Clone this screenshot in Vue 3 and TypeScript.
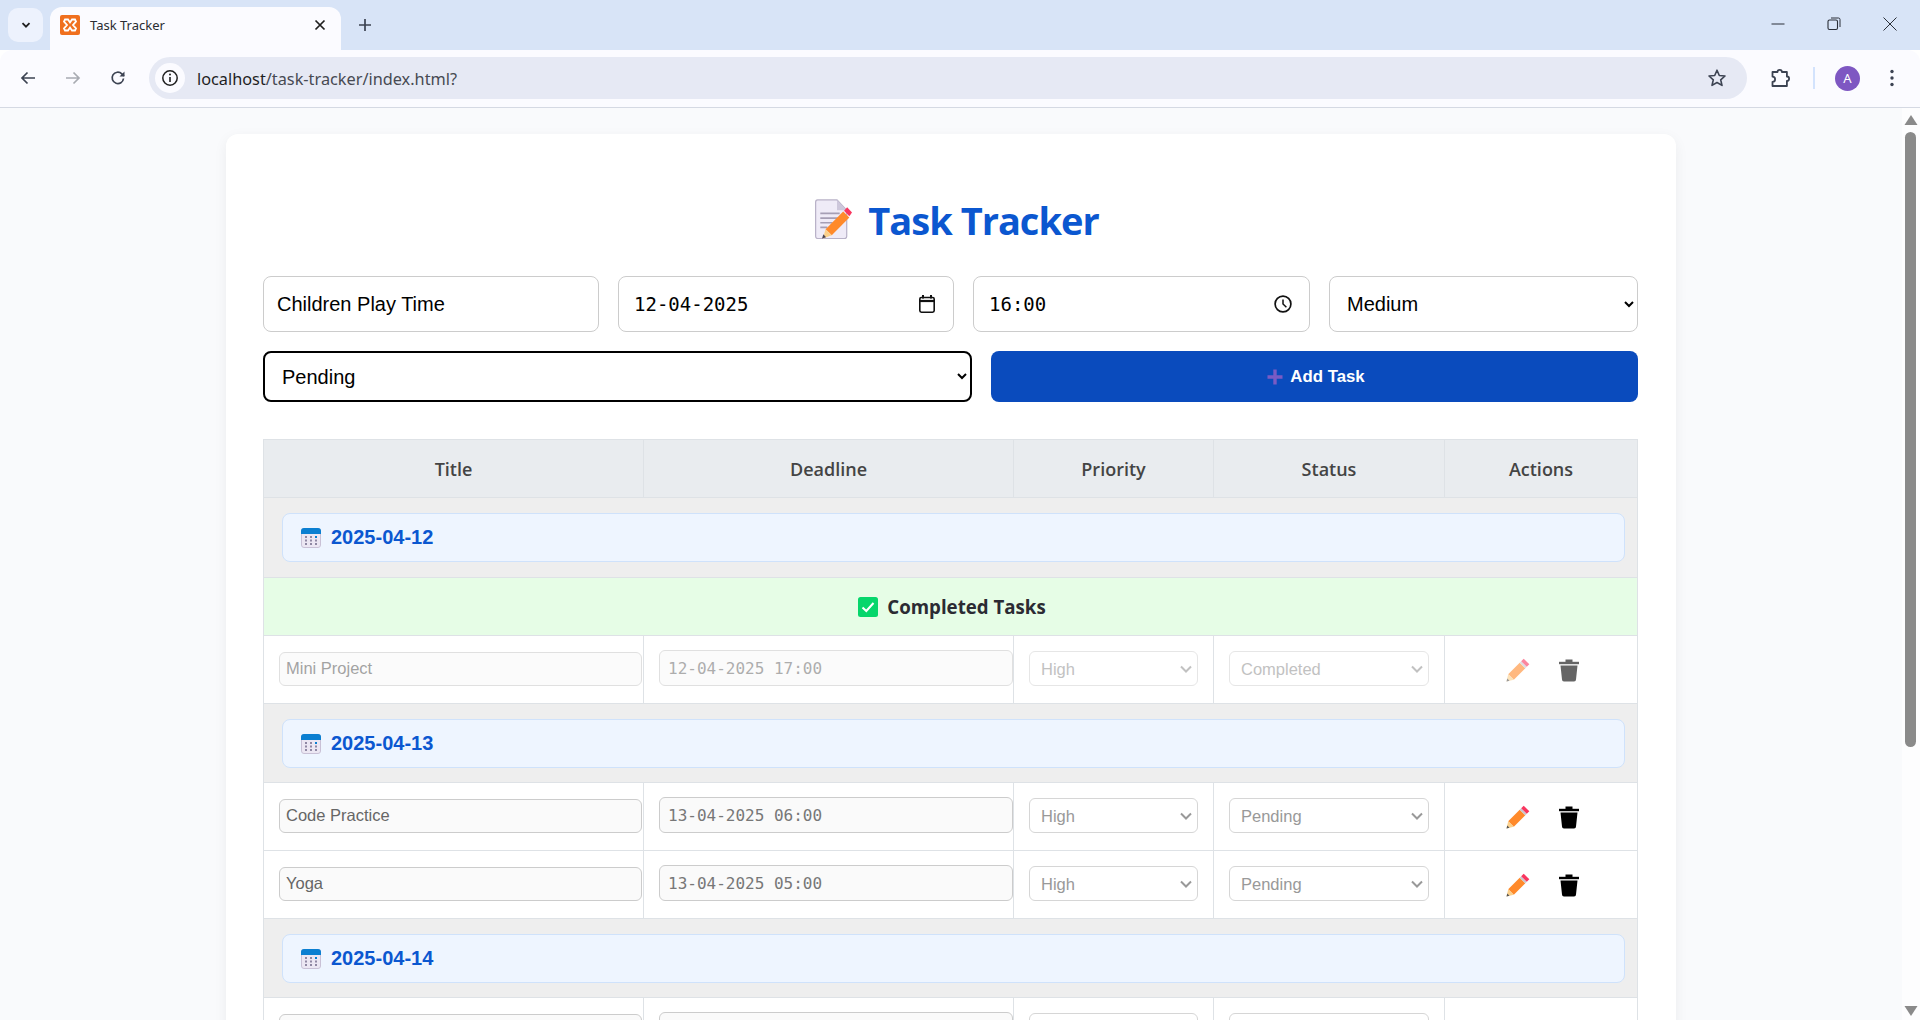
<script setup lang="ts">
interface Task {
  title: string
  deadline: string
  priority: string
  status: string
  done?: boolean
}
interface Group {
  date: string
  completed?: Task[]
  tasks: Task[]
}

const groups: Group[] = [
  {
    date: '2025-04-12',
    completed: [{ title: 'Mini Project', deadline: '12-04-2025 17:00', priority: 'High', status: 'Completed', done: true }],
    tasks: [],
  },
  {
    date: '2025-04-13',
    tasks: [
      { title: 'Code Practice', deadline: '13-04-2025 06:00', priority: 'High', status: 'Pending' },
      { title: 'Yoga', deadline: '13-04-2025 05:00', priority: 'High', status: 'Pending' },
    ],
  },
  {
    date: '2025-04-14',
    tasks: [{ title: '', deadline: '', priority: 'High', status: 'Pending' }],
  },
]

const columns = ['Title', 'Deadline', 'Priority', 'Status', 'Actions']
</script>

<template>
  <div class="window">
    <div class="tabstrip">
      <button type="button" class="tabstrip__list">
        <svg viewBox="0 0 12 12" width="12" height="12"><path d="M2.5 4.2 6 7.7l3.5-3.5" fill="none" stroke="#1f1f1f" stroke-width="1.8" /></svg>
      </button>
      <div class="tab">
        <svg class="tab__favicon" viewBox="0 0 20 20" width="20" height="20">
          <rect width="20" height="20" rx="2" fill="#f0701f" />
          <path d="M5 4.5h3l2 3 2-3h3l1 2-3 3.500 3 3.500-1 2h-3l-2-3-2 3H5l-1-2 3-3.500-3-3.500z" fill="none" stroke="#fff" stroke-width="1.800" />
        </svg>
        <span class="tab__title">Task Tracker</span>
        <svg class="tab__close" viewBox="0 0 12 12" width="12" height="12"><path d="M1.500 1.500l9 9M10.500 1.500l-9 9" stroke="#1f1f1f" stroke-width="1.700" /></svg>
      </div>
      <svg class="tabstrip__new" viewBox="0 0 14 14" width="14" height="14"><path d="M7 1v12M1 7h12" stroke="#3c4352" stroke-width="1.700" /></svg>
      <div class="winctl">
        <svg viewBox="0 0 14 14" width="14" height="14"><path d="M0.500 7h13" stroke="#2a2f38" stroke-width="1" /></svg>
        <svg viewBox="0 0 14 14" width="14" height="14"><rect x="1" y="3" width="9.500" height="9.500" rx="1.500" fill="none" stroke="#2a2f38" stroke-width="1.100" /><path d="M4 1h7.500A1.500 1.500 0 0 1 13 2.500V10" fill="none" stroke="#2a2f38" stroke-width="1" /></svg>
        <svg viewBox="0 0 14 14" width="14" height="14"><path d="M0.500 0.500l13 13M13.500 0.500l-13 13" stroke="#2a2f38" stroke-width="1" /></svg>
      </div>
    </div>

    <div class="toolbar">
      <svg class="toolbar__nav" viewBox="0 0 18 18" width="18" height="18"><path d="M16 9H3M8.500 3.500 3 9l5.500 5.500" fill="none" stroke="#3c4352" stroke-width="1.700" /></svg>
      <svg class="toolbar__nav" viewBox="0 0 18 18" width="18" height="18"><path d="M2 9h13M9.500 3.500 15 9l-5.500 5.500" fill="none" stroke="#a8abb2" stroke-width="1.700" /></svg>
      <svg class="toolbar__nav" viewBox="0 0 18 18" width="18" height="18"><path d="M14.500 9.500A5.700 5.700 0 1 1 12.800 4.800L15 7" fill="none" stroke="#3c4352" stroke-width="1.700" /><path d="M15.500 2.500V7.500H10.500z" fill="#3c4352" /></svg>
      <div class="omnibox">
        <span class="omnibox__info">
          <svg viewBox="0 0 18 18" width="18" height="18"><circle cx="9" cy="9" r="7.200" fill="none" stroke="#1f1f1f" stroke-width="1.500" /><path d="M9 8v5" stroke="#1f1f1f" stroke-width="1.600" /><circle cx="9" cy="5.500" r="1" fill="#1f1f1f" /></svg>
        </span>
        <span class="omnibox__url">localhost<span class="omnibox__path">/task-tracker/index.html?</span></span>
        <svg class="omnibox__star" viewBox="0 0 20 20" width="20" height="20"><path d="M10 2.200l2.300 5.300 5.700.5-4.300 3.800 1.300 5.600L10 14.500l-5 2.900 1.300-5.600L2 8l5.700-.5z" fill="none" stroke="#3c4352" stroke-width="1.600" stroke-linejoin="round" /></svg>
      </div>
      <svg class="toolbar__puzzle" viewBox="0 0 22 22" width="22" height="22"><path d="M2.500 5h5a2.200 2.200 0 0 1 4.400 0h5v4.500a2.200 2.200 0 0 1 0 4.400V19H2.500v-4.200a2.600 2.600 0 0 0 0-5.200z" fill="none" stroke="#3c4352" stroke-width="1.800" stroke-linejoin="round" /></svg>
      <span class="toolbar__sep" />
      <span class="toolbar__avatar">A</span>
      <svg class="toolbar__menu" viewBox="0 0 6 20" width="6" height="20"><circle cx="3" cy="3.500" r="1.700" fill="#3c4352" /><circle cx="3" cy="10" r="1.700" fill="#3c4352" /><circle cx="3" cy="16.500" r="1.700" fill="#3c4352" /></svg>
    </div>

    <div class="viewport">
      <main class="page">
        <section class="card">
          <h1 class="heading">
            <svg class="heading__icon" viewBox="0 0 42 43" width="37" height="40" preserveAspectRatio="none">
              <path d="M3 1h22l11 11v28a2.500 2.500 0 0 1-2.500 2.500H3A2.500 2.500 0 0 1 .7 40V3.500A2.500 2.500 0 0 1 3 1z" fill="#efebf7" stroke="#b9b2c8" stroke-width="1.400" />
              <path d="M25 1v11h11z" fill="#cdc7db" />
              <path d="M6 15.500h22M6 20.500h20M6 25.500h14M6 30.500h8" stroke="#a69fb5" stroke-width="1.800" />
              <path d="M32 13.500l7 6.500L19 39l-7-6.500z" fill="#ff8a2b" />
              <path d="M12 32.500l7 6.500-10 3.500z" fill="#fbd08b" />
              <path d="M8 42.500l1.500-4.500 3 3z" fill="#4a4455" />
              <path d="M33 12.500l3.500-3.500 5.500 5.500-3 4z" fill="#f9365f" />
            </svg>
            Task Tracker
          </h1>

          <form class="entry" @submit.prevent>
            <div class="entry__row entry__row--top">
              <input class="field field--title" type="text" value="Children Play Time" />
              <div class="field field--mono field--date">
                <input class="field__inner" type="text" value="12-04-2025" />
                <svg viewBox="0 0 18 18" width="18" height="18"><path d="M5 0v3.500M13 0v3.500" stroke="#111" stroke-width="2" /><rect x="1.800" y="2.500" width="14.400" height="14.700" rx="1.600" fill="none" stroke="#111" stroke-width="1.600" /><path d="M1.800 6h14.400" stroke="#111" stroke-width="2.200" /></svg>
              </div>
              <div class="field field--mono field--time">
                <input class="field__inner" type="text" value="16:00" />
                <svg viewBox="0 0 18 18" width="18" height="18"><circle cx="9" cy="9" r="7.900" fill="none" stroke="#111" stroke-width="1.700" /><path d="M9 4.500V9l3.400 3.200" fill="none" stroke="#111" stroke-width="1.500" /></svg>
              </div>
              <select class="field field--select">
                <option>Medium</option>
              </select>
            </div>
            <div class="entry__row">
              <select class="field field--status">
                <option>Pending</option>
              </select>
              <button type="button" class="add">
                <svg viewBox="0 0 16 16" width="16" height="16"><path d="M8 .5v15M.5 8h15" stroke="#7a5bc4" stroke-width="3.400" /></svg>
                Add Task
              </button>
            </div>
          </form>

          <table class="tasks">
            <colgroup>
              <col class="tasks__col-title" />
              <col class="tasks__col-deadline" />
              <col class="tasks__col-priority" />
              <col class="tasks__col-status" />
              <col />
            </colgroup>
            <thead>
              <tr>
                <th v-for="col in columns" :key="col">{{ col }}</th>
              </tr>
            </thead>
            <tbody>
              <template v-for="group in groups" :key="group.date">
                <tr class="tasks__date">
                  <td colspan="5">
                    <div class="badge">
                      <svg viewBox="0 0 20 20" width="20" height="20">
                        <rect x=".5" y=".5" width="19" height="19" rx="2.500" fill="#ece7f3" stroke="#c9c1d6" />
                        <path d="M0 6V3a3 3 0 0 1 3-3h14a3 3 0 0 1 3 3v3z" fill="#0b7fd1" />
                        <g fill="#8f88a3">
                          <rect x="4" y="8" width="2" height="2" /><rect x="9" y="8" width="2" height="2" /><rect x="14" y="8" width="2" height="2" fill="#0b7fd1" />
                          <rect x="4" y="11.500" width="2" height="2" /><rect x="9" y="11.500" width="2" height="2" /><rect x="14" y="11.500" width="2" height="2" />
                          <rect x="4" y="15" width="2" height="2" /><rect x="9" y="15" width="2" height="2" /><rect x="14" y="15" width="2" height="2" />
                        </g>
                      </svg>
                      {{ group.date }}
                    </div>
                  </td>
                </tr>
                <tr v-if="group.completed" class="tasks__done">
                  <td colspan="5">
                    <span class="tasks__done-label">
                      <svg viewBox="0 0 20 20" width="20" height="20"><rect width="20" height="20" rx="2.500" fill="#06d66b" /><path d="M4.500 10.500l3.800 3.500 7.200-8" fill="none" stroke="#fff" stroke-width="2" /></svg>
                      Completed Tasks
                    </span>
                  </td>
                </tr>
                <tr
                  v-for="task in [...(group.completed ?? []), ...group.tasks]"
                  :key="task.title + task.deadline"
                  class="tasks__row"
                  :class="task.done ? 'tasks__row--done' : ''"
                >
                  <td><input class="cell-input cell-input--title" type="text" :value="task.title" readonly /></td>
                  <td><input class="cell-input cell-input--deadline" type="text" :value="task.deadline" readonly /></td>
                  <td><select class="cell-select" disabled><option>{{ task.priority }}</option></select></td>
                  <td><select class="cell-select" disabled><option>{{ task.status }}</option></select></td>
                  <td>
                    <div class="actions">
                      <svg viewBox="0 0 24 24" width="24" height="24">
                        <path d="M2.200 16.200L13.700 4.700l5.600 5.600L7.800 21.800z" fill="#ff8a2b" />
                        <path d="M2.200 16.200l5.600 5.600-7.300 1.700z" fill="#fbd08b" />
                        <path d="M.5 23.500l.7-3 2.300 2.300z" fill="#555" />
                        <path d="M13.700 4.700l1.500-1.500 5.600 5.600-1.500 1.500z" fill="#c9c5cf" />
                        <path d="M15.200 3.200L17.700.7l5.600 5.600-2.500 2.500z" fill="#f9365f" />
                      </svg>
                      <svg viewBox="0 0 24 24" width="24" height="24">
                        <path d="M2 3.800h20v2.400H2z" fill="currentColor" />
                        <path d="M8.500 1.500h7V4h-7z" fill="currentColor" />
                        <path d="M3.500 7.500h17L19 21.500a2 2 0 0 1-2 2H7a2 2 0 0 1-2-2z" fill="currentColor" />
                      </svg>
                    </div>
                  </td>
                </tr>
              </template>
            </tbody>
          </table>
        </section>
      </main>
      <div class="scrollbar">
        <svg viewBox="0 0 18 17" width="18" height="17"><path d="M9 7l6.500 10h-13z" fill="#8a8a8a" /></svg>
        <div class="scrollbar__track"><div class="scrollbar__thumb" /></div>
        <svg viewBox="0 0 18 17" width="18" height="17"><path d="M9 13L2.500 3h13z" fill="#8a8a8a" /></svg>
      </div>
    </div>
  </div>
</template>

<style>
html, body { margin: 0; overflow: hidden; }
</style>

<style scoped>
.window {
  width: 1920px;
  height: 1020px;
  display: flex;
  flex-direction: column;
  overflow: hidden;
  font-family: 'Liberation Sans', Arial, sans-serif;
}

/* ── browser chrome ── */
.tabstrip {
  flex: none;
  height: 50px;
  background: #d8e4f7;
  display: flex;
  align-items: flex-end;
  box-sizing: border-box;
  padding-left: 8px;
}
.tabstrip__list {
  width: 35px; height: 34px;
  margin-bottom: 8px;
  padding: 0;
  border: 0;
  border-radius: 10px;
  background: #edf2fd;
  display: flex; align-items: center; justify-content: center;
}
.tab {
  margin-left: 7px;
  width: 291px; height: 43px;
  box-sizing: border-box;
  padding: 0 15px 7px 10px;
  border-radius: 12px 12px 0 0;
  background: #fbfbff;
  display: flex; align-items: center;
}
.tab__title {
  margin-left: 10px;
  flex: 1;
  font-family: 'Noto Sans', sans-serif;
  font-size: 13px;
  color: #2a2d33;
}
.tabstrip__new { margin: 0 0 18px 17px; }
.winctl {
  margin-left: auto;
  height: 100%;
  display: flex;
  gap: 42px;
  padding: 17px 23px 0 0;
  box-sizing: border-box;
  align-items: flex-start;
}

.toolbar {
  flex: none;
  height: 58px;
  background: #fbfbff;
  border-bottom: 1px solid #d5d9e3;
  border-radius: 12px 12px 0 0;
  box-sizing: border-box;
  display: flex;
  align-items: center;
  padding: 0 19px 1px 19px;
}
.toolbar__nav { margin-right: 27px; }
.toolbar__nav:nth-child(3) { margin-right: 18px; }
.omnibox {
  width: 1598px; height: 42px;
  margin-left: 4px;
  box-sizing: border-box;
  padding: 0 20px 0 6px;
  border-radius: 21px;
  background: #e6e9f4;
  display: flex; align-items: center;
}
.omnibox__info {
  width: 30px; height: 30px;
  border-radius: 50%;
  background: #fbfbff;
  display: flex; align-items: center; justify-content: center;
}
.omnibox__url {
  margin-left: 12px;
  padding-top: 2px;
  flex: 1;
  font-family: 'Noto Sans', sans-serif;
  font-size: 16.300px;
  color: #1f1f1f;
}
.omnibox__path { color: #474a52; }
.toolbar__puzzle { margin-left: 23px; }
.toolbar__sep { margin-left: 21px; width: 2px; height: 22px; background: #d3e3fd; }
.toolbar__avatar {
  margin-left: 20px;
  width: 25px; height: 25px;
  border-radius: 50%;
  background: #7e57c2;
  color: #fff;
  font-family: 'Noto Sans', sans-serif;
  font-size: 13px;
  display: flex; align-items: center; justify-content: center;
}
.toolbar__menu { margin-left: 29px; }

/* ── page ── */
.viewport { flex: 1; min-height: 0; display: flex; }
.page {
  flex: 1;
  min-width: 0;
  background: #f9fafc;
  padding: 26px 0 0 226px;
  overflow: hidden;
}
.card {
  width: 1450px;
  box-sizing: border-box;
  padding: 58px 37px 0;
  border-radius: 12px;
  background: #fff;
  box-shadow: 0 4px 14px rgba(0,0,0,0.06);
}
.heading {
  margin: 0 0 30px;
  height: 52px;
  padding: 2px 0 0 12px;
  display: flex;
  align-items: center;
  justify-content: center;
  gap: 16px;
  font-family: 'Open Sans', sans-serif;
  font-size: 38px;
  font-weight: 700;
  letter-spacing: -1px;
  color: #0b57d0;
}
.heading__icon { margin-top: -2px; }

.entry { display: flex; flex-direction: column; gap: 19px; margin-bottom: 37px; }
.entry__row { display: flex; gap: 19px; }
.entry__row--top .field { height: 56px; }
.field {
  box-sizing: border-box;
  border: 1px solid #ccc;
  border-radius: 8px;
  background: #fff;
  font-family: 'Liberation Sans', Arial, sans-serif;
  font-size: 20px;
  color: #000;
  outline: none;
}
.field--title { width: 336px; padding: 0 13px; }
.field--mono {
  width: 336px;
  display: flex;
  align-items: center;
  padding: 0 17px 0 15px;
}
.field--time { width: 337px; }
.field--mono svg { flex: none; }
.field__inner {
  flex: 1;
  min-width: 0;
  padding: 0;
  border: 0;
  outline: none;
  background: transparent;
  font-family: 'DejaVu Sans Mono', monospace;
  font-size: 19px;
  color: #000;
}
.field--select { width: 309px; padding: 0 0 0 13px; }
.field--status {
  width: 709px; height: 51px;
  padding: 0 0 0 13px;
  border: 2px solid #000;
}
.add {
  width: 647px; height: 51px;
  padding: 1px 0 0 3px;
  border: 0;
  border-radius: 8px;
  background: #0a4bbd;
  color: #fff;
  font-family: 'Liberation Sans', Arial, sans-serif;
  font-size: 16.800px;
  font-weight: 700;
  display: flex; align-items: center; justify-content: center;
  gap: 7px;
}

/* ── table ── */
.tasks {
  width: 1375px;
  table-layout: fixed;
  border-collapse: collapse;
  border: 1px solid #dee2e6;
}
.tasks__col-title { width: 380px; }
.tasks__col-deadline { width: 370px; }
.tasks__col-priority { width: 200px; }
.tasks__col-status { width: 231px; }
.tasks th {
  height: 57px;
  padding: 0;
  border: 1px solid #dee2e6;
  background: #e9ecef;
  font-family: 'Open Sans', sans-serif;
  font-size: 18px;
  font-weight: 600;
  color: #444;
}
.tasks td { border: 1px solid #dee2e6; padding: 15px 16px 17px; }
.tasks__date td { padding: 15px 12px 14px 18px; background: #eee; }
.tasks__date:first-child td { padding-bottom: 15px; }
.badge {
  height: 49px;
  box-sizing: border-box;
  padding: 0 0 0 18px;
  border: 1px solid #cfe2fb;
  border-radius: 8px;
  background: #eef5ff;
  display: flex;
  align-items: center;
  gap: 10px;
  font-size: 20px;
  font-weight: 700;
  color: #0b57d0;
}
.tasks__done td {
  height: 58px;
  padding: 2px 0 0;
  box-sizing: border-box;
  background: #e6fde6;
  text-align: center;
}
.tasks__done-label {
  display: inline-flex;
  align-items: center;
  gap: 9px;
  padding-left: 3px;
  font-family: 'Open Sans', sans-serif;
  font-size: 18.700px;
  font-weight: 700;
  color: #2b2b33;
}
.cell-input {
  display: block;
  box-sizing: border-box;
  margin-left: -1px;
  padding: 0 6px;
  border: 1px solid #ccc;
  border-radius: 6px;
  background: #fafafa;
  font-family: 'Liberation Sans', Arial, sans-serif;
  font-size: 16.500px;
  color: #666;
  outline: none;
}
.cell-input--title { width: calc(100% + 16px); height: 34px; }
.cell-input--deadline {
  width: calc(100% + 17px);
  height: 36px;
  margin-top: -1px;
  padding: 0 8px;
  font-family: 'DejaVu Sans Mono', monospace;
  font-size: 16px;
  font-weight: 300;
  color: #777;
}
.cell-select {
  display: block;
  width: calc(100% + 2px);
  height: 35px;
  margin-left: -1px;
  box-sizing: border-box;
  padding: 0 20px 0 11px;
  border: 1px solid #d6d6d6;
  border-radius: 6px;
  appearance: none;
  background: #fff url("data:image/svg+xml,%3Csvg xmlns='http://www.w3.org/2000/svg' width='12' height='8' viewBox='0 0 12 8'%3E%3Cpath d='M1 1.500l5 5 5-5' fill='none' stroke='%23999' stroke-width='2'/%3E%3C/svg%3E") no-repeat right 5px center;
  font-family: 'Liberation Sans', Arial, sans-serif;
  font-size: 16.500px;
  color: #999;
  opacity: 1;
}
.actions {
  display: flex;
  align-items: center;
  justify-content: center;
  gap: 27px;
  margin-top: 2px;
  padding-left: 4px;
  color: #000;
}
.tasks__row--done input,
.tasks__row--done select,
.tasks__row--done .actions { opacity: 0.6; }

/* ── scrollbar ── */
.scrollbar {
  flex: none;
  width: 18px;
  background: #fdfdfe;
  display: flex;
  flex-direction: column;
}
.scrollbar__track { flex: 1; min-height: 0; }
.scrollbar__thumb {
  width: 11px;
  height: 615px;
  margin: 7px 0 0 3px;
  border-radius: 5.500px;
  background: #8a8a8a;
}
</style>
